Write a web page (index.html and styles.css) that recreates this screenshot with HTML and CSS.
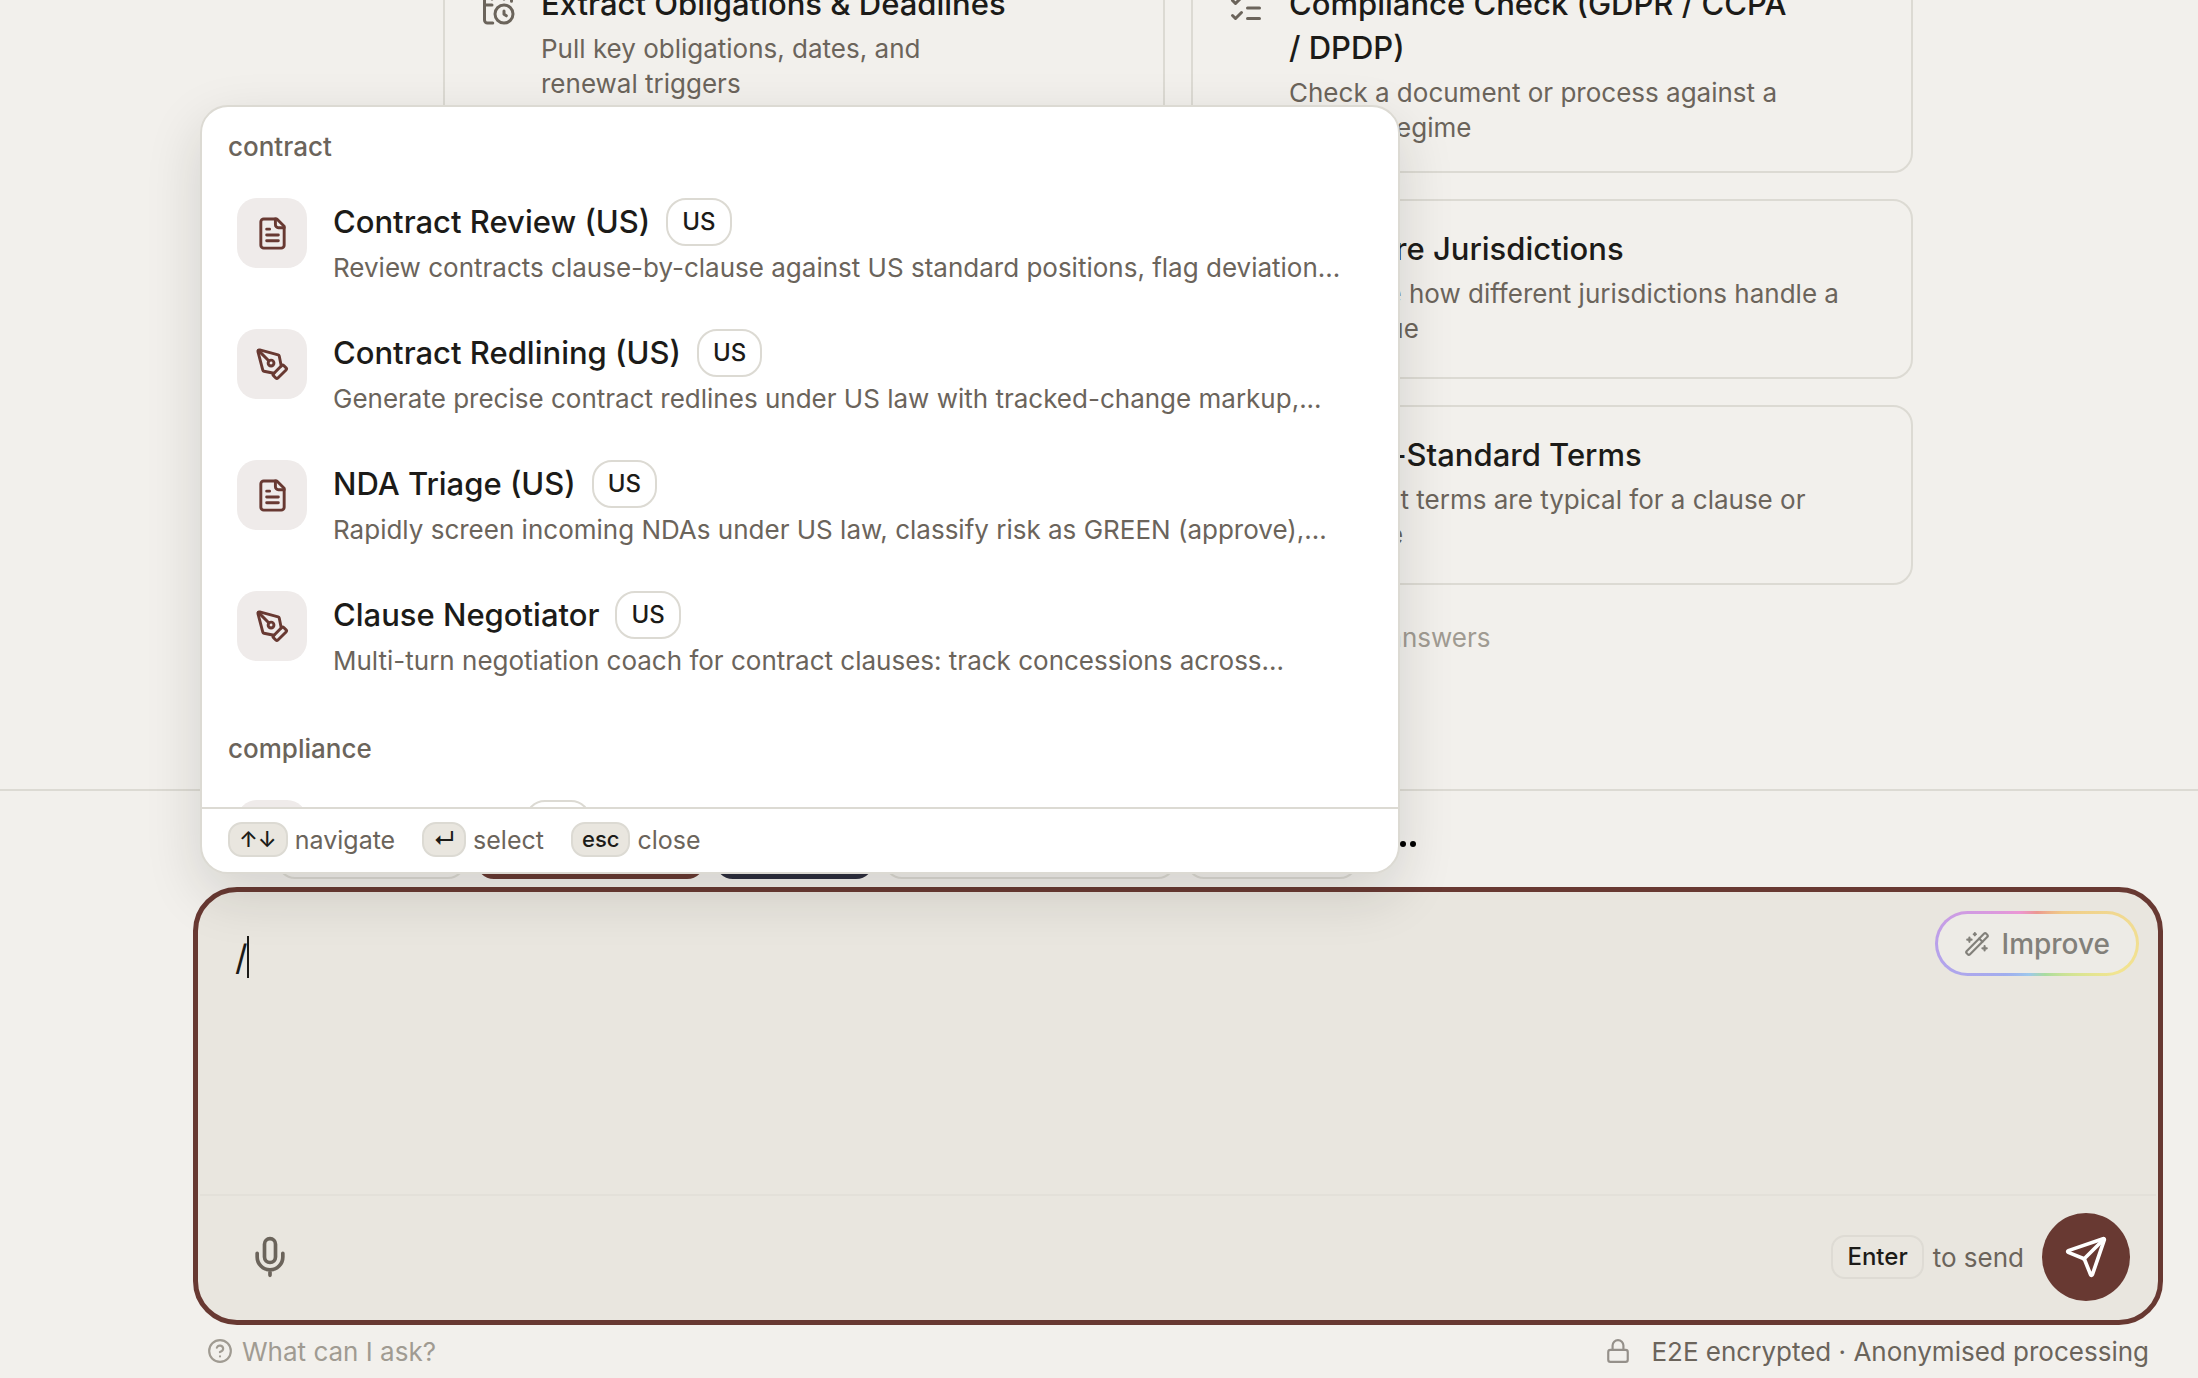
FILE: index.html
```html
<!DOCTYPE html>
<html lang="en">
<head>
    <meta charset="UTF-8">
    <meta name="viewport" content="width=device-width, initial-scale=1.0">
    <title>Ask</title>
    <link rel="stylesheet" href="styles.css">
</head>
<body>

    <!-- shared icons -->
    <svg class="sprite" aria-hidden="true">
        <symbol id="i-file" viewBox="0 0 24 24">
            <path d="M15 2H6a2 2 0 0 0-2 2v16a2 2 0 0 0 2 2h12a2 2 0 0 0 2-2V7Z"/>
            <path d="M14 2v4a2 2 0 0 0 2 2h4"/>
            <path d="M10 9H8M16 13H8M16 17H8"/>
        </symbol>
        <symbol id="i-pen" viewBox="0 0 24 24">
            <path d="M15.707 21.293a1 1 0 0 1-1.414 0l-1.586-1.586a1 1 0 0 1 0-1.414l5.586-5.586a1 1 0 0 1 1.414 0l1.586 1.586a1 1 0 0 1 0 1.414z"/>
            <path d="m18 13-1.375-6.874a1 1 0 0 0-.746-.776L3.235 2.028a1 1 0 0 0-1.207 1.207L5.35 15.879a1 1 0 0 0 .776.746L13 18"/>
            <path d="m2.3 2.3 7.286 7.286"/>
            <circle cx="11" cy="11" r="2"/>
        </symbol>
        <symbol id="i-checks" viewBox="0 0 24 24">
            <path d="M13 5h8M13 12h8M13 19h8"/>
            <path d="m3 17 2 2 4-4"/>
            <path d="m3 7 2 2 4-4"/>
        </symbol>
        <symbol id="i-calendar" viewBox="0 0 24 24">
            <path d="M16 14v2.2l1.6 1"/>
            <path d="M16 2v4M8 2v4M3 10h5"/>
            <path d="M21 7.5V6a2 2 0 0 0-2-2H5a2 2 0 0 0-2 2v14a2 2 0 0 0 2 2h3.5"/>
            <circle cx="16" cy="16" r="6"/>
        </symbol>
    </svg>

    <main class="suggestions">
        <div class="cards">
            <button class="card">
                <svg class="icon card-icon"><use href="#i-calendar"/></svg>
                <span class="card-text">
                    <span class="card-title">Extract Obligations &amp; Deadlines</span>
                    <span class="card-desc">Pull key obligations, dates, and<br>renewal triggers</span>
                </span>
            </button>
            <button class="card">
                <svg class="icon card-icon"><use href="#i-checks"/></svg>
                <span class="card-text">
                    <span class="card-title">Compliance Check (GDPR / CCPA<br>/ DPDP)</span>
                    <span class="card-desc">Check a document or process against a<br>privacy regime</span>
                </span>
            </button>
            <button class="card">
                <svg class="icon card-icon"><use href="#i-file"/></svg>
                <span class="card-text">
                    <span class="card-title">Draft a Clause</span>
                    <span class="card-desc">Generate a clause<br>for your deal</span>
                </span>
            </button>
            <button class="card">
                <svg class="icon card-icon"><use href="#i-checks"/></svg>
                <span class="card-text">
                    <span class="card-title">Compare Jurisdictions</span>
                    <span class="card-desc">Compare how different jurisdictions handle a<br>legal issue</span>
                </span>
            </button>
            <button class="card">
                <svg class="icon card-icon"><use href="#i-file"/></svg>
                <span class="card-text">
                    <span class="card-title">Summarise a Document</span>
                    <span class="card-desc">Get the key points<br>in plain English</span>
                </span>
            </button>
            <button class="card">
                <svg class="icon card-icon"><use href="#i-checks"/></svg>
                <span class="card-text">
                    <span class="card-title">Market-Standard Terms</span>
                    <span class="card-desc">Find what terms are typical for a clause or<br>deal type</span>
                </span>
            </button>
        </div>
        <p class="hint">Add your jurisdiction and facts for precise answers</p>
    </main>

    <footer class="dock">
        <div class="chips">
            <button class="chip chip-a">General</button>
            <button class="chip chip-b chip-red">Contracts</button>
            <button class="chip chip-c chip-navy">Deep</button>
            <button class="chip chip-d">Jurisdiction</button>
            <button class="chip chip-e">Attach</button>
            <button class="more" aria-label="More options">
                <svg viewBox="0 0 26 6"><circle cx="3" cy="3" r="3"/><circle cx="13" cy="3" r="3"/><circle cx="23" cy="3" r="3"/></svg>
            </button>
        </div>

        <div class="composer-wrap">
            <form class="composer">
                <div class="entry">
                    <textarea class="prompt" aria-label="Message">/</textarea>
                    <span class="caret"></span>
                    <button type="button" class="improve">
                        <svg class="icon improve-icon" viewBox="0 0 24 24">
                            <path d="m21.64 3.64-1.28-1.28a1.21 1.21 0 0 0-1.72 0L2.36 18.64a1.21 1.21 0 0 0 0 1.72l1.28 1.28a1.2 1.2 0 0 0 1.72 0L21.64 5.36a1.2 1.2 0 0 0 0-1.72"/>
                            <path d="m14 7 3 3M5 6v4M19 14v4M10 2v2M7 8H3M21 16h-4M11 3H9"/>
                        </svg>
                        Improve
                    </button>
                </div>
                <div class="toolbar">
                    <button type="button" class="mic" aria-label="Dictate">
                        <svg class="icon" viewBox="0 0 24 24">
                            <path d="M12 19v3M19 10v2a7 7 0 0 1-14 0v-2"/>
                            <rect x="9" y="2" width="6" height="13" rx="3"/>
                        </svg>
                    </button>
                    <span class="send-hint"><kbd class="enter">Enter</kbd>to send</span>
                    <button type="submit" class="send" aria-label="Send">
                        <svg class="icon" viewBox="0 0 24 24">
                            <path d="M14.536 21.686a.5.5 0 0 0 .937-.024l6.5-19a.496.496 0 0 0-.635-.635l-19 6.5a.5.5 0 0 0-.024.937l7.93 3.18a2 2 0 0 1 1.112 1.11z"/>
                            <path d="m21.854 2.147-10.94 10.939"/>
                        </svg>
                    </button>
                </div>
            </form>

            <!-- slash command menu -->
            <div class="menu">
                <div class="menu-list">
                    <section class="group">
                        <h2 class="group-label">contract</h2>
                        <button class="row">
                            <span class="tile"><svg class="icon"><use href="#i-file"/></svg></span>
                            <span class="row-text">
                                <span class="row-title">Contract Review (US)<span class="badge">US</span></span>
                                <span class="row-desc">Review contracts clause-by-clause against US standard positions, flag deviation...</span>
                            </span>
                        </button>
                        <button class="row">
                            <span class="tile"><svg class="icon"><use href="#i-pen"/></svg></span>
                            <span class="row-text">
                                <span class="row-title">Contract Redlining (US)<span class="badge">US</span></span>
                                <span class="row-desc">Generate precise contract redlines under US law with tracked-change markup,...</span>
                            </span>
                        </button>
                        <button class="row">
                            <span class="tile"><svg class="icon"><use href="#i-file"/></svg></span>
                            <span class="row-text">
                                <span class="row-title">NDA Triage (US)<span class="badge">US</span></span>
                                <span class="row-desc">Rapidly screen incoming NDAs under US law, classify risk as GREEN (approve),...</span>
                            </span>
                        </button>
                        <button class="row">
                            <span class="tile"><svg class="icon"><use href="#i-pen"/></svg></span>
                            <span class="row-text">
                                <span class="row-title">Clause Negotiator<span class="badge">US</span></span>
                                <span class="row-desc">Multi-turn negotiation coach for contract clauses: track concessions across...</span>
                            </span>
                        </button>
                    </section>
                    <section class="group">
                        <h2 class="group-label">compliance</h2>
                        <button class="row">
                            <span class="tile"><svg class="icon"><use href="#i-file"/></svg></span>
                            <span class="row-text">
                                <span class="row-title">DPA Review<span class="badge">US</span></span>
                                <span class="row-desc">Review data processing agreements</span>
                            </span>
                        </button>
                    </section>
                </div>
                <div class="menu-keys">
                    <span class="key"><kbd>↑↓</kbd>navigate</span>
                    <span class="key"><kbd>↵</kbd>select</span>
                    <span class="key"><kbd>esc</kbd>close</span>
                </div>
            </div>
        </div>

        <div class="legal">
            <a class="help" href="#">
                <svg class="icon" viewBox="0 0 24 24">
                    <circle cx="12" cy="12" r="10"/>
                    <path d="M9.09 9a3 3 0 0 1 5.83 1c0 2-3 3-3 3M12 17h.01"/>
                </svg>
                What can I ask?
            </a>
            <span class="secure">
                <svg class="icon" viewBox="0 0 24 24">
                    <rect x="3" y="11" width="18" height="11" rx="2"/>
                    <path d="M7 11V7a5 5 0 0 1 10 0v4"/>
                </svg>
                E2E encrypted · Anonymised processing
            </span>
        </div>
    </footer>

</body>
</html>
```
FILE: styles.css
```css
:root {
    --page: #f2f0ec;
    --sand: #e9e6df;
    --line: #dcdad3;
    --ink: #1c1b18;
    --muted: #6b645b;
    --faint: #a09b92;
    --brand: #683932;
}
* {
    box-sizing: border-box;
}
body {
    margin: 0;
    height: 100vh;
    display: flex;
    flex-direction: column;
    overflow: hidden;
    background: var(--page);
    color: var(--ink);
    font-family: Inter, "Liberation Sans", sans-serif;
    font-size: 26px;
}
button {
    font: inherit;
    color: inherit;
    background: none;
    border: 0;
    padding: 0;
    text-align: left;
    cursor: pointer;
}
kbd {
    font: inherit;
}
.sprite {
    display: none;
}
.icon {
    flex: none;
    fill: none;
    stroke: currentColor;
    stroke-width: 2;
    stroke-linecap: round;
    stroke-linejoin: round;
}

/* suggestion cards */
.suggestions {
    flex: 1;
    min-height: 0;
    display: flex;
    flex-direction: column;
    justify-content: flex-end;
    align-items: center;
    padding: 0 35px 133px 193px;
}
.cards {
    width: 100%;
    max-width: 1470px;
    display: grid;
    grid-template-columns: 1fr 1fr;
    gap: 26px;
}
.card {
    display: flex;
    align-items: flex-start;
    gap: 25px;
    min-height: 180px;
    padding: 26px 35px;
    border: 2px solid var(--line);
    border-radius: 20px;
}
.card-icon {
    width: 36px;
    height: 36px;
    margin-top: 8px;
    color: var(--muted);
}
.card-text {
    display: flex;
    flex-direction: column;
    gap: 5px;
}
.card-title {
    font-size: 31px;
    font-weight: 500;
    line-height: 44px;
}
.card-desc {
    line-height: 35px;
    color: var(--muted);
}
.hint {
    margin: 35px 0 0;
    line-height: 36px;
    color: var(--faint);
}

/* bottom dock */
.dock {
    flex: none;
    padding: 18px 35px 0 193px;
    border-top: 2px solid var(--line);
}
.chips {
    display: flex;
    gap: 10px;
    padding-left: 84px;
    margin-bottom: 8px;
}
.chip {
    height: 70px;
    border: 2px solid var(--line);
    border-radius: 18px;
    text-align: center;
}
.chip-a { width: 189px; }
.chip-b { width: 229px; }
.chip-c { width: 159px; }
.chip-d { width: 292px; }
.chip-e { width: 172px; }
.chip-red {
    background: var(--brand);
    border-color: var(--brand);
    color: #fff;
}
.chip-navy {
    background: #2c2d3d;
    border-color: #2c2d3d;
    color: #fff;
}
.more {
    padding: 0 22px;
}
.more svg {
    display: block;
    width: 26px;
    height: 6px;
}
.composer-wrap {
    position: relative;
}
.composer {
    border: 5px solid var(--brand);
    border-radius: 44px;
    background: var(--sand);
}
.entry {
    position: relative;
    display: flex;
    align-items: flex-start;
    height: 302px;
    padding: 19px;
}
.prompt {
    flex: 1;
    height: 260px;
    padding: 21px 18px;
    border: 0;
    outline: 0;
    resize: none;
    background: none;
    color: inherit;
    font: inherit;
    font-size: 35px;
    line-height: 50px;
}
.caret {
    position: absolute;
    left: 49px;
    top: 44px;
    width: 2px;
    height: 42px;
    background: var(--ink);
}
.improve {
    display: flex;
    align-items: center;
    gap: 12px;
    height: 65px;
    padding: 0 26px;
    border: 3px solid transparent;
    border-radius: 33px;
    background:
        linear-gradient(#edebe6, #edebe6) padding-box,
        conic-gradient(#ec9890, #f0cb88 40deg, #f1dc92 80deg, #f2e490 110deg, #dbe592 125deg, #a9dc9e 165deg, #9dc8ec 195deg, #a0aeee 225deg, #b9a0ea 270deg, #d79ae0 300deg, #ec96d4 330deg, #ec9890) border-box;
    color: #82807a;
    font-size: 28px;
    font-weight: 500;
}
.improve-icon {
    width: 26px;
    height: 26px;
}
.toolbar {
    display: flex;
    align-items: center;
    height: 126px;
    margin: 0 2px;
    padding: 0 26px 2px 48px;
    border-top: 2px solid #e3e0d9;
}
.mic {
    color: var(--muted);
}
.mic .icon, .send .icon {
    display: block;
    width: 44px;
    height: 44px;
}
.send-hint {
    display: flex;
    align-items: center;
    gap: 9px;
    margin: 0 18px 0 auto;
    color: var(--muted);
}
.enter {
    height: 44px;
    padding: 0 14px;
    border: 2px solid #dedbd4;
    border-radius: 14px;
    color: var(--ink);
    font-size: 24px;
    font-weight: 500;
    line-height: 40px;
}
.send {
    display: grid;
    place-items: center;
    width: 88px;
    height: 88px;
    border-radius: 50%;
    background: var(--brand);
    color: #fff;
}
.legal {
    display: flex;
    justify-content: space-between;
    align-items: center;
    height: 53px;
    padding: 0 14px 1px;
    color: var(--muted);
}
.legal .icon {
    width: 26px;
    height: 26px;
}
.help, .secure {
    display: flex;
    align-items: center;
}
.help {
    gap: 9px;
    color: var(--faint);
    text-decoration: none;
}
.secure {
    gap: 20px;
}
.secure .icon {
    color: #95908a;
}

/* slash menu, floats above the composer */
.menu {
    position: absolute;
    left: 7px;
    bottom: calc(100% + 13px);
    width: 100%;
    max-width: 1200px;
    border: 2px solid var(--line);
    border-radius: 28px;
    background: #fff;
    overflow: hidden;
    box-shadow: 0 20px 56px rgba(28, 27, 24, 0.14);
}
.menu-list {
    height: 700px;
    overflow: hidden;
}
.group {
    margin-bottom: 8px;
}
.group-label {
    margin: 0;
    padding: 22px 26px 12px;
    font-size: 26px;
    font-weight: 500;
    line-height: 36px;
    color: var(--muted);
}
.row {
    display: flex;
    align-items: flex-start;
    gap: 26px;
    width: 100%;
    padding: 21px 35px;
}
.tile {
    flex: none;
    display: grid;
    place-items: center;
    width: 70px;
    height: 70px;
    border-radius: 20px;
    background: #efebea;
    color: var(--brand);
}
.tile .icon {
    width: 35px;
    height: 35px;
}
.row-text {
    display: flex;
    flex-direction: column;
    gap: 2px;
    min-width: 0;
}
.row-title {
    display: flex;
    align-items: center;
    gap: 16px;
    font-size: 31px;
    font-weight: 500;
    line-height: 48px;
}
.badge {
    height: 48px;
    padding: 0 14px;
    border: 2px solid var(--line);
    border-radius: 20px;
    font-size: 24px;
    line-height: 43px;
}
.row-desc {
    line-height: 39px;
    color: var(--muted);
    white-space: nowrap;
    overflow: hidden;
    text-overflow: ellipsis;
}
.menu-keys {
    display: flex;
    align-items: center;
    gap: 27px;
    height: 65px;
    padding: 0 26px 2px;
    border-top: 2px solid var(--line);
    color: var(--muted);
    font-size: 25px;
}
.key {
    display: flex;
    align-items: center;
    gap: 7px;
}
.key kbd {
    height: 35px;
    padding: 0 9px;
    border: 2px solid var(--line);
    border-radius: 14px;
    background: var(--sand);
    color: var(--ink);
    font-size: 22px;
    font-weight: 500;
    line-height: 31px;
}
```
